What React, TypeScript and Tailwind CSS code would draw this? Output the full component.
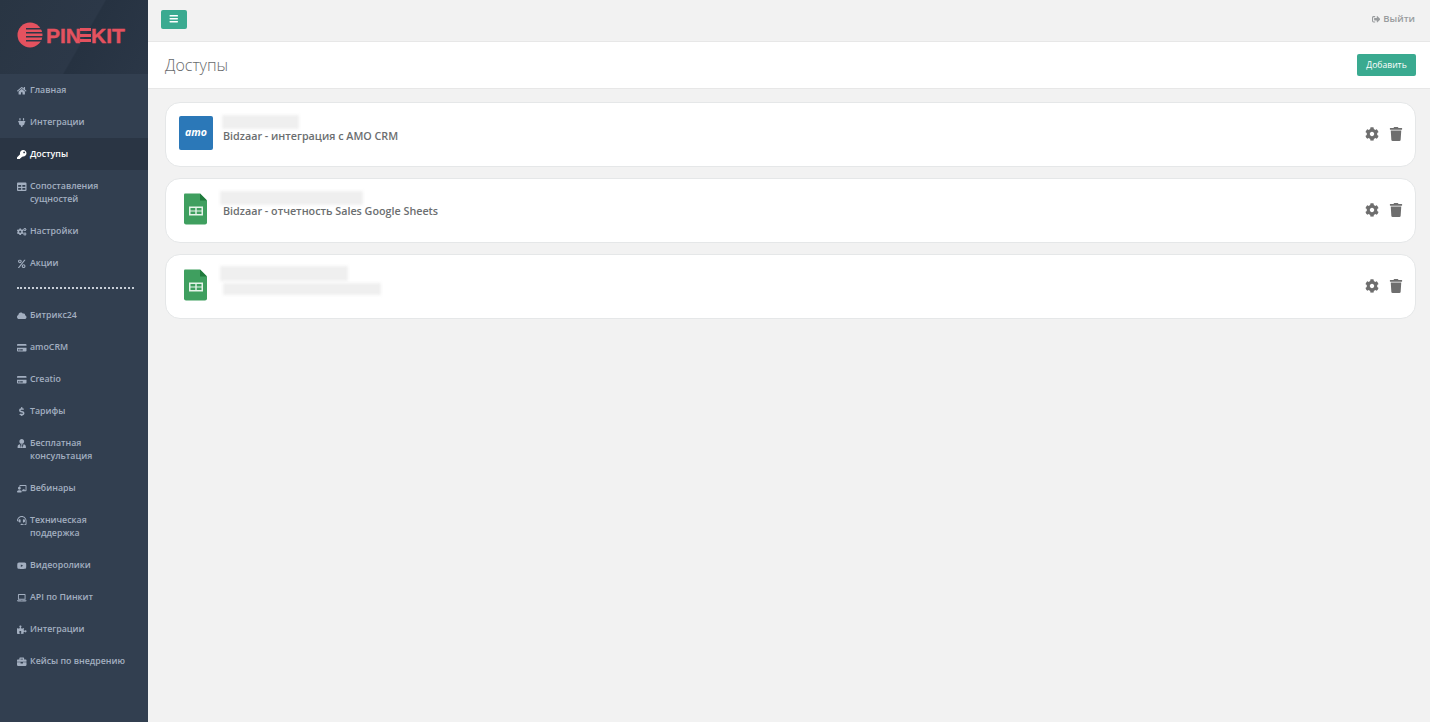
import type { ReactNode } from 'react';
import {
  FaHome,
  FaPlug,
  FaKey,
  FaTable,
  FaCogs,
  FaPercent,
  FaCloud,
  FaCreditCard,
  FaDollarSign,
  FaUserTie,
  FaChalkboardTeacher,
  FaHeadset,
  FaYoutube,
  FaLaptop,
  FaPuzzlePiece,
  FaBriefcase,
  FaBars,
  FaSignOutAlt,
  FaCog,
  FaTrash,
} from 'react-icons/fa';

interface MenuItem {
  label: string;
  second?: string;
  icon: ReactNode;
  active?: boolean;
}

const topMenu: MenuItem[] = [
  { label: 'Главная', icon: <FaHome /> },
  { label: 'Интеграции', icon: <FaPlug /> },
  { label: 'Доступы', icon: <FaKey />, active: true },
  { label: 'Сопоставления', second: 'сущностей', icon: <FaTable /> },
  { label: 'Настройки', icon: <FaCogs /> },
  { label: 'Акции', icon: <FaPercent className="scale-90" /> },
];

const bottomMenu: MenuItem[] = [
  { label: 'Битрикс24', icon: <FaCloud /> },
  { label: 'amoCRM', icon: <FaCreditCard /> },
  { label: 'Creatio', icon: <FaCreditCard /> },
  { label: 'Тарифы', icon: <FaDollarSign /> },
  { label: 'Бесплатная', second: 'консультация', icon: <FaUserTie /> },
  { label: 'Вебинары', icon: <FaChalkboardTeacher /> },
  { label: 'Техническая', second: 'поддержка', icon: <FaHeadset /> },
  { label: 'Видеоролики', icon: <FaYoutube /> },
  { label: 'API по Пинкит', icon: <FaLaptop /> },
  { label: 'Интеграции', icon: <FaPuzzlePiece /> },
  { label: 'Кейсы по внедрению', icon: <FaBriefcase /> },
];

const SidebarItem = ({ item }: { item: MenuItem }) => (
  <a
    className={`flex px-[17px] pt-[10px] pb-[9px] text-[8.8px] leading-[13px] font-semibold ${
      item.active ? 'bg-[#2a3544] text-white' : 'text-[#a3afc0]'
    }`}
  >
    <span className="w-[13px] shrink-0 h-[13px] flex items-center text-[9.5px]">{item.icon}</span>
    <span>
      {item.label}
      {item.second && <span className="block">{item.second}</span>}
    </span>
  </a>
);

const logoText =
  "text-[#e4525f] text-[21px] leading-none font-bold [-webkit-text-stroke:0.4px_#e4525f] font-['Liberation_Sans',sans-serif]";

const Logo = () => (
  <div className="h-[74px] bg-[linear-gradient(120deg,#293543_0%,#2c3848_55%,#263241_56%,#2b3747_100%)] flex items-center pl-[17px] pb-[4px]">
    <svg width="26" height="26" viewBox="0 0 26 26" className="shrink-0">
      <circle cx="13" cy="13" r="12.5" fill="#e4525f" />
      <g fill="#2b3747">
        <rect x="9" y="6" width="17" height="1.5" />
        <rect x="9" y="10" width="17" height="1.5" />
        <rect x="9" y="14" width="17" height="1.5" />
        <rect x="9" y="18" width="17" height="1.5" />
      </g>
    </svg>
    <span className={`ml-[3px] ${logoText}`}>PIN</span>
    <span className="flex flex-col gap-[2.5px] w-[11px] ml-[-1px]">
      <span className="h-[3px] bg-[#e4525f]" />
      <span className="h-[3px] bg-[#e4525f]" />
      <span className="h-[3px] bg-[#e4525f]" />
    </span>
    <span className={logoText}>KIT</span>
  </div>
);

const AmoIcon = () => (
  <div className="w-[34px] h-[34px] rounded-[2px] bg-[#2b78b8] flex items-center justify-center text-white text-[10.5px] font-bold italic leading-none">
    amo
  </div>
);

const SheetsIcon = () => (
  <svg width="34" height="32" viewBox="0 0 34 32">
    <path d="M6 0.5h15l7 7v22a2 2 0 0 1-2 2H7a2 2 0 0 1-2-2V1.5a1 1 0 0 1 1-1z" fill="#3f9f5f" />
    <path d="M21 0.5l7 7h-7z" fill="#1f7a3c" />
    <path
      d="M10 13.5h14v9H10z M11.5 15h4.8v2.4h-4.8z M17.7 15h4.8v2.4h-4.8z M11.5 18.6h4.8v2.4h-4.8z M17.7 18.6h4.8v2.4h-4.8z"
      fill="#e6f4ea"
      fillRule="evenodd"
    />
  </svg>
);

const AccessCard = ({ icon, children }: { icon: ReactNode; children: ReactNode }) => (
  <div className="h-[65px] rounded-[15px] border border-[#e5e7e8] bg-white flex items-center pl-[13px] pr-[12px]">
    <div className="w-[34px] shrink-0 flex justify-center mb-[4px]">{icon}</div>
    <div className="flex-1 ml-[10px] mb-[12px] flex flex-col text-[10.75px] font-semibold leading-[14px] text-[#6b6e70]">
      {children}
    </div>
    <div className="flex items-center gap-[10px] text-[#6e6e6e] text-[14px] mb-[2px]">
      <FaCog />
      <FaTrash />
    </div>
  </div>
);

const Blurred = ({ className }: { className: string }) => (
  <div className={`blur-[1.5px] bg-[#efefef] ${className}`} />
);

const App = () => {
  return (
    <div className="flex min-h-screen bg-[#f2f2f2] font-['Open_Sans',sans-serif]">
      <aside className="w-[148px] shrink-0 bg-[#323f50]">
        <Logo />
        {topMenu.map(item => (
          <SidebarItem key={item.label} item={item} />
        ))}
        <div className="ml-[17px] mr-[14px] mt-[8px] mb-[10px] h-[2px] border-t-2 border-dotted border-[#c7ced8]" />
        {bottomMenu.map(item => (
          <SidebarItem key={item.label} item={item} />
        ))}
      </aside>

      <main className="flex-1 min-w-0">
        <header className="h-[42px] border-b border-[#e7e7e7] flex items-center justify-between pl-[13px] pr-[15px]">
          <button
            type="button"
            className="w-[26px] h-[19px] mb-[3px] rounded-[2px] bg-[#3aaa90] text-white text-[9.5px] flex items-center justify-center"
          >
            <FaBars />
          </button>
          <a className="flex items-center gap-[3px] text-[9.5px] font-semibold text-[#999c9e] mb-[2px]">
            <FaSignOutAlt className="text-[8.5px]" />
            Выйти
          </a>
        </header>

        <div className="h-[47px] bg-white border-b border-[#e7e7e7] flex items-center justify-between pl-[17px] pr-[14px]">
          <h2 className="text-[16px] font-light text-[#676a6c]">Доступы</h2>
          <button
            type="button"
            className="w-[59px] h-[22px] rounded-[2px] bg-[#3aaa90] text-white text-[8.6px] font-medium flex items-center justify-center"
          >
            Добавить
          </button>
        </div>

        <div className="pt-[13px] pl-[17px] pr-[14px] flex flex-col gap-[11px]">
          <AccessCard icon={<AmoIcon />}>
            <Blurred className="w-[77px] h-[14px] -ml-[1px]" />
            <span>Bidzaar - интеграция с AMO CRM</span>
          </AccessCard>
          <AccessCard icon={<SheetsIcon />}>
            <Blurred className="w-[143px] h-[14px] -ml-[3px] mb-[-1px]" />
            <span>Bidzaar - отчетность Sales Google Sheets</span>
          </AccessCard>
          <AccessCard icon={<SheetsIcon />}>
            <Blurred className="w-[128px] h-[15px] -ml-[3px]" />
            <Blurred className="w-[158px] h-[12px] mt-[2px] bg-[#e4e4e4]" />
          </AccessCard>
        </div>
      </main>
    </div>
  );
};

export default App;
